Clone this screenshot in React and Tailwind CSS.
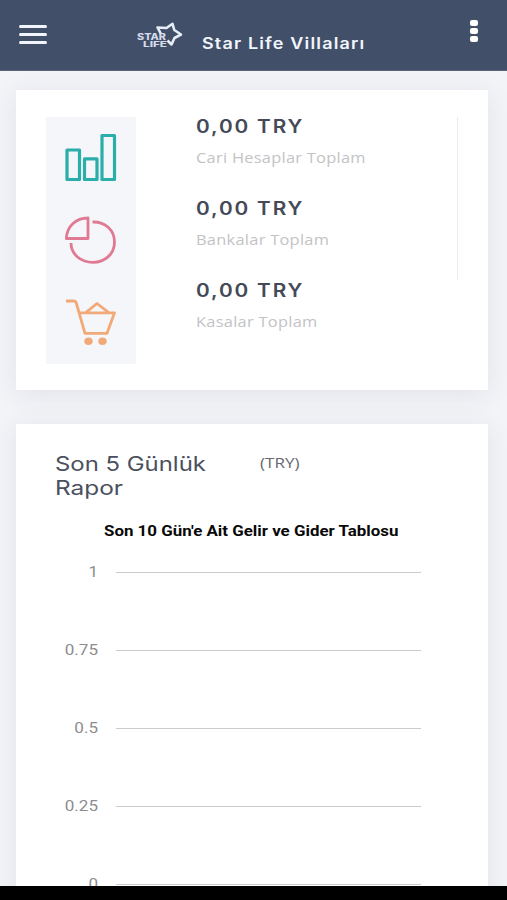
const totals = [
  { label: "Cari Hesaplar Toplam", amount: "0,00 TRY" },
  { label: "Bankalar Toplam", amount: "0,00 TRY" },
  { label: "Kasalar Toplam", amount: "0,00 TRY" },
];

const ticks = ["1", "0.75", "0.5", "0.25", "0"];

function BarsIcon() {
  return (
    <svg className="h-[52px] w-[52px]" viewBox="0 0 52 52" fill="none" stroke="#2badaa" strokeWidth="3.200" strokeLinejoin="round">
      <path d="M2 17h12.500v29.500H2zM19.500 25.800h12.500V46.500H19.500zM37 2.500h12.500v44H37z" />
    </svg>
  );
}

function PieIcon() {
  return (
    <svg className="h-[52px] w-[52px]" viewBox="0 0 52 52" fill="none" stroke="#e07a93" strokeWidth="2.800" strokeLinejoin="round">
      <path d="M23 3v20.500H1.300C2 11.500 10.500 3 23 3z" />
      <path d="M27.500 7C40 6.500 49.500 15 49.500 27C49.500 39 40 47.300 28 47.300S6 39.500 6 28" />
    </svg>
  );
}

function CartIcon() {
  return (
    <svg className="h-[52px] w-[52px]" viewBox="0 0 52 52" fill="none" stroke="#f2a978" strokeWidth="2.800" strokeLinejoin="round">
      <path d="M1 4h7.500c1.500 0 2.300.5 2.800 2L20 36.300h22L49.500 15.800H15" />
      <path d="M21 15.300l11-8.800 11.500 8.800" />
      <ellipse cx="23.500" cy="44.300" rx="4.200" ry="3.700" fill="#f2a978" stroke="none" />
      <ellipse cx="37.500" cy="44.300" rx="4.200" ry="3.700" fill="#f2a978" stroke="none" />
    </svg>
  );
}

function Logo() {
  return (
    <svg className="h-[28px] w-[48px]" viewBox="0 0 48 28" fill="none">
      <path
        d="M25 13L21.500 6.500L30.500 7L36.500 2.800L38.300 9L45 13.500L38.500 17L35.500 23.500L31.500 19.500"
        stroke="#e6edf7"
        strokeWidth="2.600"
        strokeLinejoin="round"
      />
      <g fill="#d3dbe8" fontFamily="Inter, sans-serif" fontWeight="800">
        <text x="1" y="18.800" fontSize="8.500" textLength="29" lengthAdjust="spacingAndGlyphs">STAR</text>
        <text x="7" y="25.500" fontSize="7.500" textLength="24" lengthAdjust="spacingAndGlyphs">LIFE</text>
      </g>
    </svg>
  );
}

function Header() {
  return (
    <header className="relative z-10 flex h-[71px] shrink-0 items-start border-b border-[#5d6578] bg-[#424f69] text-[#f1f6fc]">
      <div className="mt-[25px] ml-[19px] flex w-7 flex-col gap-[5.500px]">
        <span className="h-[2.500px] rounded bg-current" />
        <span className="h-[2.500px] rounded bg-current" />
        <span className="h-[2.500px] rounded bg-current" />
      </div>
      <div className="mt-[21px] ml-[89px]"><Logo /></div>
      <h1 className="mt-[34px] ml-[18px] w-[240px] origin-left scale-x-[1.16] text-[15.500px] leading-5 font-semibold tracking-[1px] whitespace-nowrap">
        Star Life Villaları
      </h1>
      <div className="mt-[20px] mr-[29px] ml-auto flex w-[8px] flex-col gap-[2px]">
        <span className="h-[6px] rounded-[2px] bg-white" />
        <span className="h-[6px] rounded-[2px] bg-white" />
        <span className="h-[6px] rounded-[2px] bg-white" />
      </div>
    </header>
  );
}

function Summary() {
  return (
    <section className="flex h-[300px] shrink-0 items-start bg-white pt-[27px] pl-[30px] shadow-[0_4px_26px_rgba(60,60,65,0.09)]">
      <div className="flex h-[247px] w-[90px] flex-col items-center gap-[30px] bg-[#f5f6fa] pt-[16px]">
        <BarsIcon />
        <PieIcon />
        <CartIcon />
      </div>
      <div className="ml-[60px] w-[261px]">
        {totals.map(({ label, amount }) => (
          <div key={label} className="h-[82px]">
            <p className="origin-left scale-x-[1.155] text-[18px] leading-[20px] font-semibold tracking-[1.600px] text-[#454a59]">{amount}</p>
            <p className="mt-[9px] origin-left scale-x-[1.08] font-['Open_Sans',sans-serif] text-[15.200px] leading-[22px] tracking-[0.250px] text-[#c3c3c5]">{label}</p>
          </div>
        ))}
      </div>
      <div className="h-[163px] w-px bg-[#ececef]" />
    </section>
  );
}

function Report() {
  return (
    <section className="h-[500px] shrink-0 bg-white pt-[28px] shadow-[0_4px_26px_rgba(60,60,65,0.09)]">
      <div className="flex pl-[39px]">
        <h2 className="w-[205px] text-[20px] leading-[24px] text-[#4b505e]">
          <span className="block origin-left scale-x-[1.195] whitespace-nowrap">Son 5 Günlük</span>
          <span className="block origin-left scale-x-[1.220]">Rapor</span>
        </h2>
        <span className="h-[20px] origin-left scale-x-[1.140] font-['Open_Sans',sans-serif] text-[15px] leading-[20px] text-[#66686f]">(TRY)</span>
      </div>
      <h3 className="mt-[21px] ml-[88px] origin-left scale-x-[1.126] font-[Roboto,sans-serif] text-[15px] leading-[20px] font-bold whitespace-nowrap text-[#080808]">
        Son 10 Gün'e Ait Gelir ve Gider Tablosu
      </h3>
      <div className="mt-[21px]">
        {ticks.map((tick) => (
          <div key={tick} className="flex h-[78px] items-start">
            <span className="w-[82px] origin-right scale-x-[1.100] text-right font-[Roboto,sans-serif] text-[15.500px] leading-[20px] text-[#8c8c8e]">{tick}</span>
            <span className="mt-[10px] ml-[18px] h-px w-[305px] bg-[#cbcbcb]" />
          </div>
        ))}
      </div>
    </section>
  );
}

export default function App() {
  return (
    <div className="flex h-[900px] w-[507px] flex-col overflow-hidden bg-black font-[Inter,sans-serif]">
      <div className="flex h-[886px] flex-col overflow-hidden bg-[#f2f4f8]">
        <Header />
        <main className="flex flex-col gap-[34px] pt-[19px] pr-[19px] pl-[16px]">
          <Summary />
          <Report />
        </main>
      </div>
    </div>
  );
}
